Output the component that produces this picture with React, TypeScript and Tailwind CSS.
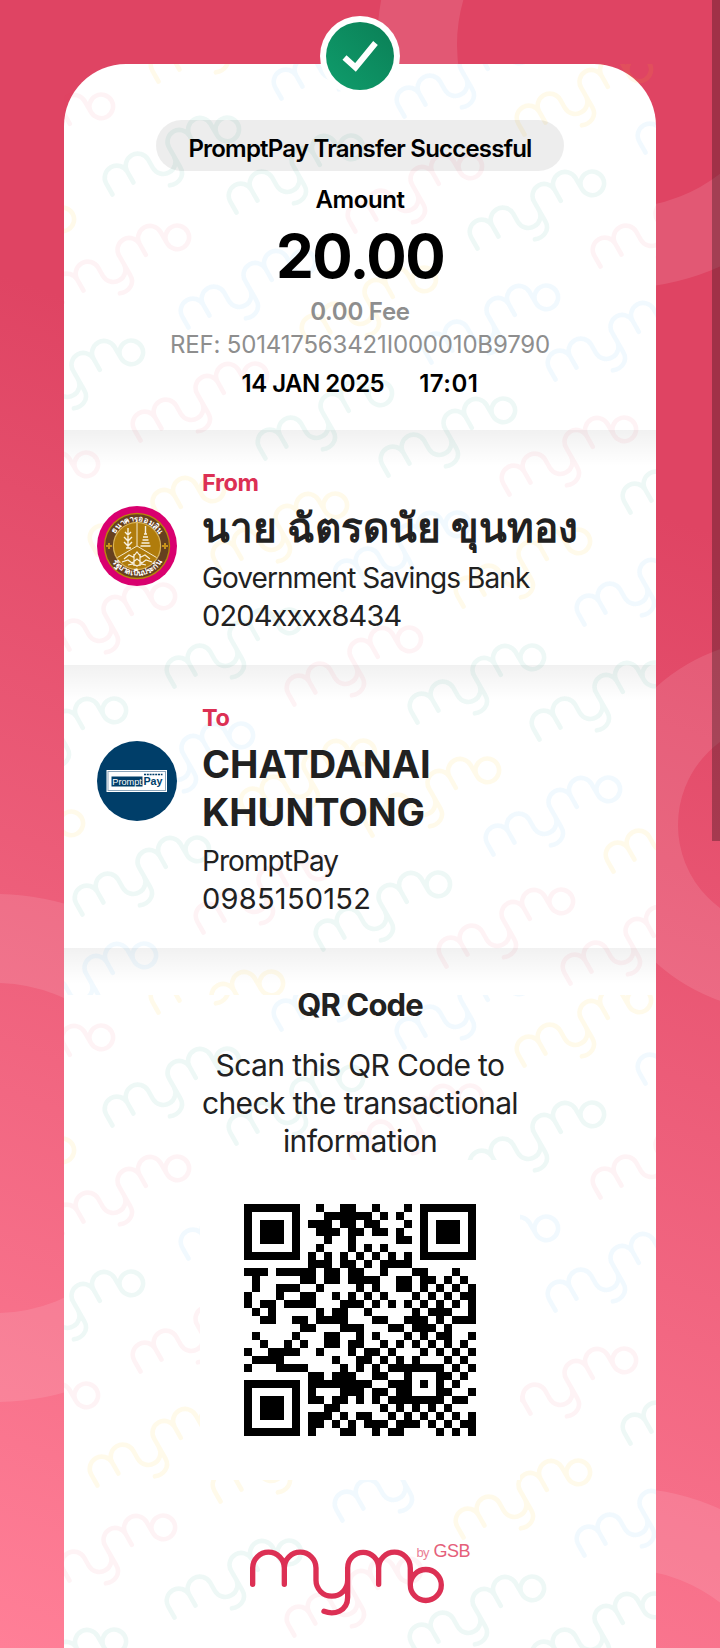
import React from "react";

/* ---------- QR code (version 3, level L, mask 0, alphanumeric) ---------- */

const ALNUM = "0123456789ABCDEFGHIJKLMNOPQRSTUVWXYZ $%*+-./:";
const SIZE = 29;
const DATA_WORDS = 55;
const EC_WORDS = 15;

function crc16(text: string): string {
  let crc = 0xffff;
  for (const ch of text) {
    crc ^= ch.charCodeAt(0) << 8;
    for (let i = 0; i < 8; i++) {
      crc = crc & 0x8000 ? ((crc << 1) ^ 0x1021) & 0xffff : (crc << 1) & 0xffff;
    }
  }
  return crc.toString(16).toUpperCase().padStart(4, "0");
}

function slipPayload(bank: string, ref: string): string {
  const inner = `0006000001` + `0103${bank}` + `02${ref.length}${ref}`;
  const body = `00${inner.length}${inner}5102TH9104`;
  return body + crc16(body);
}

function gfMul(a: number, b: number): number {
  let r = 0;
  for (let i = 7; i >= 0; i--) {
    r = (r << 1) ^ ((r >>> 7) * 0x11d);
    r ^= ((b >>> i) & 1) * a;
  }
  return r;
}

function errorWords(data: number[]): number[] {
  const gen: number[] = new Array(EC_WORDS).fill(0);
  gen[EC_WORDS - 1] = 1;
  let root = 1;
  for (let i = 0; i < EC_WORDS; i++) {
    for (let j = 0; j < EC_WORDS; j++) {
      gen[j] = gfMul(gen[j], root);
      if (j + 1 < EC_WORDS) gen[j] ^= gen[j + 1];
    }
    root = gfMul(root, 2);
  }
  const rem: number[] = new Array(EC_WORDS).fill(0);
  for (const b of data) {
    const f = b ^ (rem.shift() as number);
    rem.push(0);
    gen.forEach((g, i) => (rem[i] ^= gfMul(g, f)));
  }
  return rem;
}

function buildQr(text: string): boolean[][] {
  const bits: number[] = [];
  const put = (v: number, n: number) => {
    for (let i = n - 1; i >= 0; i--) bits.push((v >>> i) & 1);
  };
  put(2, 4);
  put(text.length, 9);
  for (let i = 0; i < text.length; i += 2) {
    if (i + 1 < text.length) put(ALNUM.indexOf(text[i]) * 45 + ALNUM.indexOf(text[i + 1]), 11);
    else put(ALNUM.indexOf(text[i]), 6);
  }
  put(0, Math.min(4, DATA_WORDS * 8 - bits.length));
  while (bits.length % 8) bits.push(0);
  const words: number[] = [];
  for (let i = 0; i < bits.length; i += 8) {
    words.push(parseInt(bits.slice(i, i + 8).join(""), 2));
  }
  for (let pad = 0xec; words.length < DATA_WORDS; pad ^= 0xec ^ 0x11) words.push(pad);
  const all = [...words, ...errorWords(words)];

  const grid: (boolean | null)[][] = Array.from({ length: SIZE }, () => new Array(SIZE).fill(null));
  const finder = (cy: number, cx: number) => {
    for (let dy = -4; dy <= 4; dy++)
      for (let dx = -4; dx <= 4; dx++) {
        const y = cy + dy;
        const x = cx + dx;
        if (y < 0 || x < 0 || y >= SIZE || x >= SIZE) continue;
        const d = Math.max(Math.abs(dx), Math.abs(dy));
        grid[y][x] = d !== 2 && d !== 4;
      }
  };
  for (let i = 0; i < SIZE; i++) {
    grid[6][i] = i % 2 === 0;
    grid[i][6] = i % 2 === 0;
  }
  finder(3, 3);
  finder(3, SIZE - 4);
  finder(SIZE - 4, 3);
  for (let dy = -2; dy <= 2; dy++)
    for (let dx = -2; dx <= 2; dx++) grid[22 + dy][22 + dx] = Math.max(Math.abs(dx), Math.abs(dy)) !== 1;

  const format = 0b111011111000100;
  const fb = (i: number) => ((format >>> i) & 1) === 1;
  for (let i = 0; i <= 5; i++) grid[i][8] = fb(i);
  grid[7][8] = fb(6);
  grid[8][8] = fb(7);
  grid[8][7] = fb(8);
  for (let i = 9; i < 15; i++) grid[8][14 - i] = fb(i);
  for (let i = 0; i < 8; i++) grid[8][SIZE - 1 - i] = fb(i);
  for (let i = 8; i < 15; i++) grid[SIZE - 15 + i][8] = fb(i);
  grid[SIZE - 8][8] = true;

  let k = 0;
  for (let right = SIZE - 1; right >= 1; right -= 2) {
    if (right === 6) right = 5;
    for (let v = 0; v < SIZE; v++) {
      for (let j = 0; j < 2; j++) {
        const x = right - j;
        const up = ((right + 1) & 2) === 0;
        const y = up ? SIZE - 1 - v : v;
        if (grid[y][x] === null) {
          const bit = k < all.length * 8 ? (all[k >>> 3] >>> (7 - (k & 7))) & 1 : 0;
          k++;
          grid[y][x] = (bit === 1) !== ((x + y) % 2 === 0);
        }
      }
    }
  }
  return grid as boolean[][];
}

function QrCode({ text }: { text: string }) {
  const d = buildQr(text)
    .map((row, y) => row.map((on, x) => (on ? `M${x} ${y}h1v1h-1z` : "")).join(""))
    .join("");
  return (
    <svg className="h-[232px] w-[232px]" viewBox="0 0 29 29" shapeRendering="crispEdges">
      <path d={d} fill="#000" />
    </svg>
  );
}

/* ---------- Brand drawings ---------- */

const MYMO =
  "M38 163V114a47.500 47.500 0 0 1 95 0V163M133 114a47.500 47.500 0 0 1 95 0V151a47.500 47.500 0 0 0 95 0M252 244c30 12 71 0 71-42V114a46.500 47 0 0 1 93 0V163M416 114a47.500 47.500 0 0 1 95 0V165a46.500 46.500 0 1 0 93 0a46.500 46.500 0 1 0-93 0";

const GREEN = "#0a9a7a";
const PINK = "#ee3355";
const BLUE = "#35a5f5";
const YELLOW = "#ffc61a";

const MARKS: [number, number, string][] = [
  [110, 195, GREEN], [234, 213, GREEN], [-16, 172, PINK], [156, 82, YELLOW], [279, 99, BLUE],
  [402, 117, BLUE], [522, 135, YELLOW], [643, 153, BLUE], [353, 232, PINK], [475, 249, GREEN],
  [598, 267, PINK], [-55, 285, YELLOW], [60, 303, PINK], [186, 328, BLUE], [307, 345, YELLOW],
  [429, 363, BLUE], [553, 380, BLUE], [14, 418, GREEN], [138, 441, PINK], [263, 459, GREEN],
  [386, 476, GREEN], [507, 495, PINK], [628, 513, GREEN], [-31, 530, PINK], [95, 555, YELLOW],
  [218, 571, YELLOW], [340, 590, BLUE], [461, 607, YELLOW], [582, 625, BLUE], [46, 662, PINK],
  [172, 687, GREEN], [292, 705, PINK], [415, 723, GREEN], [537, 740, GREEN], [-3, 776, GREEN],
  [124, 801, BLUE], [246, 818, YELLOW], [370, 836, YELLOW], [491, 855, BLUE], [611, 872, YELLOW],
  [-46, 889, YELLOW], [80, 915, GREEN], [201, 933, PINK], [321, 950, GREEN], [444, 967, PINK],
  [568, 984, PINK], [27, 1021, BLUE], [154, 1049, YELLOW],
];

function Watermark() {
  return (
    <svg className="absolute inset-0 h-full w-full" viewBox="64 64 592 1584">
      <defs>
        <clipPath id="tile">
          <rect x="64" y="64" width="592" height="931" />
        </clipPath>
        <g id="marks" clipPath="url(#tile)">
          {MARKS.map(([x, y, color], i) => (
            <path
              key={i}
              d={MYMO}
              transform={`translate(${x + 2.5} ${y - 0.5}) rotate(-29.8) scale(.254) translate(-38 -163)`}
              fill="none"
              stroke={color}
              strokeWidth="18"
              strokeLinecap="round"
              strokeOpacity={color === YELLOW ? 0.09 : color === PINK ? 0.06 : 0.07}
            />
          ))}
        </g>
      </defs>
      <use href="#marks" />
      <use href="#marks" y="931" />
    </svg>
  );
}

function GsbSeal() {
  return (
    <svg className="h-20 w-20" viewBox="0 0 80 80">
      <defs>
        <path id="arcTop" d="M15.500 40a24.500 24.500 0 0 1 49 0" />
        <path id="arcBottom" d="M10.500 40a29.500 29.500 0 0 0 59 0" />
      </defs>
      <circle cx="40" cy="40" r="40" fill="#d9006f" />
      <circle cx="40" cy="40" r="33.200" fill="#b8860b" />
      <circle cx="40" cy="40" r="31.800" fill="#66401f" />
      <circle cx="40" cy="40" r="24.200" fill="#d9b458" />
      <circle cx="40" cy="40" r="23" fill="#b07c0c" />
      <path d="M40 17v23L20.500 51.500M40 40l19.500 11.500" stroke="#f4ead0" strokeWidth="1" fill="none" />
      <path
        d="M31 22v20M28 26l3 3 3-3M27 31l4 4 4-4M27 36l4 4 4-4M29 42h5M48.500 20v8M47 28h3M46 31h5M45.500 34h6M44.500 37h8M43.500 40h10"
        stroke="#f8f1df"
        strokeWidth="1.400"
        fill="none"
      />
      <path
        d="M27 53l5-4 4 2 4-5 4 5 4-2 5 4M25 56l6-2 4 3 5-4 5 4 4-3 6 2M31 59l5-1 4 2 4-2 5 1M37 48v12M43 48v12"
        stroke="#f8f1df"
        strokeWidth="1.200"
        fill="none"
      />
      <path d="M12 37v6M9 40h6M68 37v6M65 40h6" stroke="#c9921b" strokeWidth="2" />
      <text fill="#fff" fontSize="8" fontWeight="700" textAnchor="middle" className="font-['Umpush','Norasi',cursive]">
        <textPath href="#arcTop" startOffset="50%">ธนาคารออมสิน</textPath>
      </text>
      <text fill="#fff" fontSize="8" fontWeight="700" textAnchor="middle" className="font-['Umpush','Norasi',cursive]">
        <textPath href="#arcBottom" startOffset="50%">รัฐบาลเป็นประกัน</textPath>
      </text>
    </svg>
  );
}

function PromptPaySeal() {
  return (
    <svg className="h-20 w-20" viewBox="0 0 80 80">
      <circle cx="40" cy="40" r="40" fill="#003e69" />
      <rect x="9.500" y="29" width="60.500" height="22" fill="#fff" />
      <rect x="11" y="30.500" width="57.500" height="19" fill="none" stroke="#8da6bb" strokeWidth="1" />
      <rect x="14.500" y="35.500" width="31" height="10" fill="#003e69" />
      <text x="15.300" y="43.700" fill="#fff" fontSize="9.200" textLength="29.500" lengthAdjust="spacingAndGlyphs" className="font-['Liberation_Sans',sans-serif]">
        Prompt
      </text>
      <text x="46.500" y="44" fill="#003e69" fontSize="11.500" fontWeight="700" textLength="19" lengthAdjust="spacingAndGlyphs" className="font-['Liberation_Sans',sans-serif]">
        Pay
      </text>
      <path d="M47 33.500h18.500" stroke="#003e69" strokeWidth="1.500" strokeDasharray="2 .8" />
    </svg>
  );
}

function MymoLogo() {
  return (
    <svg className="h-[100px] w-[240px]" viewBox="0 0 240 100">
      <path d={MYMO} transform="scale(.3333)" fill="none" stroke="#dc3054" strokeWidth="16" strokeLinecap="round" />
      <text x="176.500" y="27" fontSize="13" fill="#ea8095" textLength="13" className="font-['Liberation_Sans',sans-serif]">
        by
      </text>
      <text x="193.500" y="27.300" fontSize="18" fill="#e5607a" textLength="37" className="font-['Liberation_Sans',sans-serif]">
        GSB
      </text>
    </svg>
  );
}

function Backdrop() {
  return (
    <svg className="absolute inset-0 h-full w-full" viewBox="0 0 720 1648">
      <g fill="none" stroke="#fff" strokeOpacity=".11">
        <circle cx="620" cy="45" r="203" strokeWidth="80" />
        <circle cx="781" cy="825" r="144.500" strokeWidth="83" />
        <circle cx="-5" cy="1148" r="209.500" strokeWidth="89" />
        <circle cx="620" cy="1732" r="204" strokeWidth="81" />
      </g>
    </svg>
  );
}

/* ---------- Slip ---------- */

type PartyProps = {
  label: string;
  logo: React.ReactNode;
  name: string[];
  nameClass: string;
  bank: string;
  account: string;
  accountClass: string;
  className: string;
};

function Party({ label, logo, name, nameClass, bank, account, accountClass, className }: PartyProps) {
  return (
    <section
      className={`flex gap-[25px] bg-[linear-gradient(to_bottom,rgba(0,0,0,.055),rgba(0,0,0,0)_36px)] pl-[33px] ${className}`}
    >
      <div className="mt-[76px] h-20 w-20 shrink-0">{logo}</div>
      <div className="pt-[38px] whitespace-nowrap text-[#212121]">
        <p className="text-[23.5px] leading-[30px] font-bold tracking-[-0.45px] text-[#dc3054]">{label}</p>
        <div className={`mt-[7px] leading-[48px] font-bold ${nameClass}`}>
          {name.map((line) => (
            <p key={line} className="h-12">{line}</p>
          ))}
        </div>
        <p className="mt-[6px] text-[28px] leading-[38px] tracking-[-0.93px]">{bank}</p>
        <p className={`text-[29px] leading-[38px] ${accountClass}`}>{account}</p>
      </div>
    </section>
  );
}

export default function App() {
  return (
    <div className="relative h-[1648px] w-[720px] overflow-hidden bg-[linear-gradient(200deg,#df4463_28%,#ff7f97_100%)] font-['Inter','Noto_Sans_Thai',sans-serif]">
      <Backdrop />
      <div className="relative mx-16 mt-16 h-[1584px]">
        <div className="absolute inset-0 rounded-t-[62px] bg-white" />
        <Watermark />

        <main className="relative flex flex-col">
          <section className="flex h-[366px] flex-col items-center pt-14 text-2xl leading-[30px] font-semibold text-black">
            <h1 className="flex h-[51px] w-[408px] items-center justify-center rounded-full bg-black/7 pt-[6px] tracking-[-0.79px] whitespace-nowrap">
              PromptPay Transfer Successful
            </h1>
            <p className="mt-[14px] tracking-[-0.45px]">Amount</p>
            <p className="mt-[11px] text-[60px] leading-[60px] font-bold tracking-[-1.5px]">20.00</p>
            <p className="mt-[11px] tracking-[-0.25px] text-[#8e8e8e]">0.00 Fee</p>
            <p className="mt-[3px] font-normal tracking-[-0.17px] text-[#8e8e8e]">REF: 501417563421I000010B9790</p>
            <p className="mt-[9px] flex gap-[35px] tracking-[-0.5px]">
              <span>14 JAN 2025</span>
              <span className="tracking-[0.5px]">17:01</span>
            </p>
          </section>

          <Party
            label="From"
            logo={<GsbSeal />}
            name={["นาย ฉัตรดนัย ขุนทอง"]}
            nameClass="font-['Umpush','Norasi',cursive] text-[40.5px]"
            bank="Government Savings Bank"
            account="0204xxxx8434"
            accountClass="tracking-[-0.85px]"
            className="h-[235px]"
          />
          <Party
            label="To"
            logo={<PromptPaySeal />}
            name={["CHATDANAI", "KHUNTONG"]}
            nameClass="text-[38px] tracking-[-0.05px]"
            bank="PromptPay"
            account="0985150152"
            accountClass="tracking-[0.25px]"
            className="h-[283px]"
          />

          <section className="flex h-[700px] flex-col items-center bg-[linear-gradient(to_bottom,rgba(0,0,0,.055),rgba(0,0,0,0)_36px)] pt-[38px] text-[31px] leading-[38px] text-[#212121]">
            <h2 className="font-bold tracking-[-0.9px]">QR Code</h2>
            <p className="mt-[22px] text-center text-[30px] tracking-[-0.62px] whitespace-nowrap">
              Scan this QR Code to
              <br />
              check the transactional
              <br />
              information
            </p>
            <div className="flex h-80 w-80 shrink-0 items-center justify-center bg-white">
              <QrCode text={slipPayload("030", "501417563421I000010B9790")} />
            </div>
            <div className="mt-[50px]">
              <MymoLogo />
            </div>
          </section>
        </main>

        <div className="absolute -top-12 left-1/2 -ml-10 flex h-20 w-20 items-center justify-center rounded-full bg-white">
          <div className="flex h-[68px] w-[68px] items-center justify-center rounded-full bg-linear-to-tr from-[#0f9d6c] to-[#0b7f56]">
            <svg className="h-[68px] w-[68px]" viewBox="0 0 68 68">
              <path d="M18.500 35.500L29.500 45.500 49.500 21" fill="none" stroke="#fff" strokeWidth="6" />
            </svg>
          </div>
        </div>
      </div>
      <div className="absolute top-0 right-0 h-[841px] w-2 bg-black/28" />
    </div>
  );
}
